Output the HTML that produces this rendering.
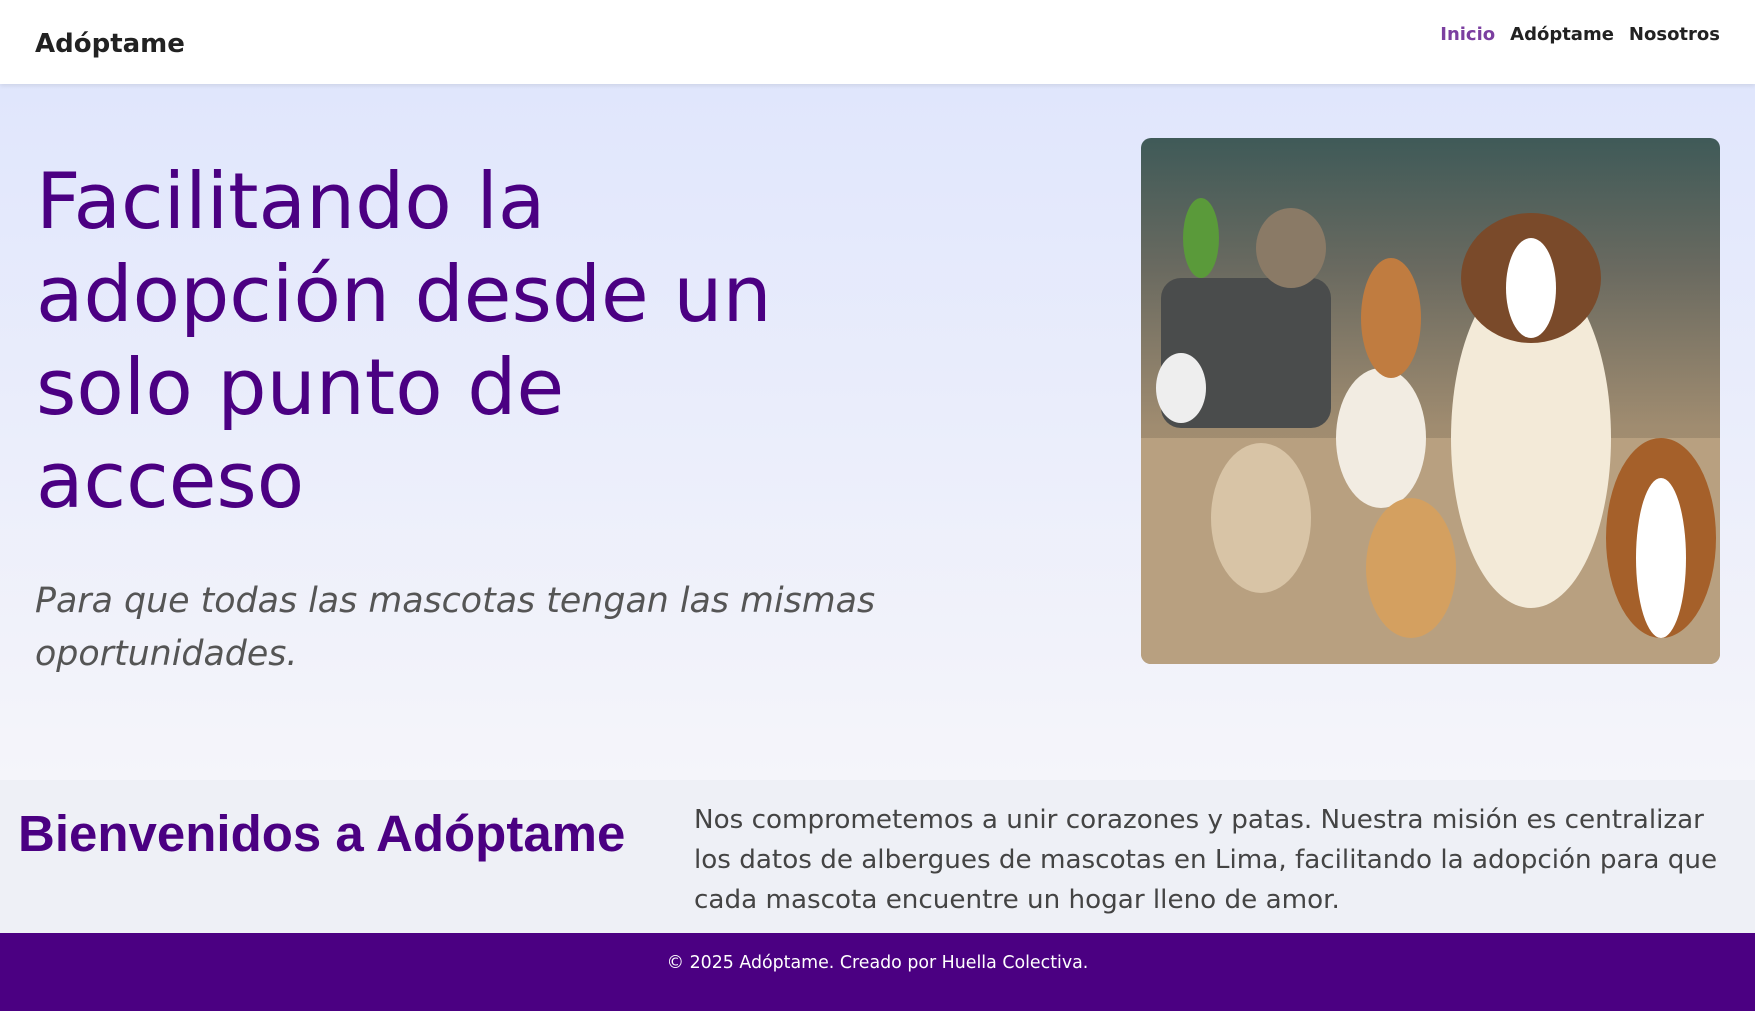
<!DOCTYPE html>
<html><head><meta charset="utf-8"><style>
*{margin:0;padding:0;box-sizing:border-box}
body{width:1755px;height:1011px;overflow:hidden;font-family:"DejaVu Sans","Liberation Sans",sans-serif;background:#fff}
header{height:84px;background:#fff;position:relative;box-shadow:0 2px 4px rgba(0,0,0,.08);z-index:2}
.logo{position:absolute;left:35px;top:29px;font-weight:bold;font-size:26px;color:#222}
nav{position:absolute;right:35px;top:24px;font-weight:bold;font-size:18px;color:#222}
nav span{margin-left:15px}
nav .on{color:#7b3fa0}
.hero{position:absolute;top:84px;left:0;width:1755px;height:696px;background:linear-gradient(#e0e6fc,#f5f5fa)}
h1{position:absolute;left:36px;top:72px;font-weight:normal;font-size:77.5px;line-height:93px;color:#4b0082;width:770px}
.sub{position:absolute;left:35px;top:491px;font-style:italic;font-size:34.8px;line-height:53px;color:#555;width:920px}
.img{position:absolute;left:1141px;top:54px;width:579px;height:526px;border-radius:10px;overflow:hidden;background:linear-gradient(#3f5a58 0%,#6a6a60 25%,#a08c70 55%,#b49c7e 100%)}
.sec{position:absolute;top:780px;left:0;width:1755px;height:153px;background:#eef0f6}
h2{position:absolute;left:18px;top:24px;font-family:"Liberation Sans",sans-serif;font-weight:bold;font-size:51px;color:#4b0082}
.sec p{position:absolute;left:694px;top:20px;width:1030px;font-size:26.2px;line-height:40px;color:#444}
footer{position:absolute;top:933px;left:0;width:1755px;height:78px;background:#4b0082;color:#fff;text-align:center;font-size:17.4px;padding-top:20px}
</style></head><body>
<header><div class="logo">Adóptame</div><nav><span class="on">Inicio</span><span>Adóptame</span><span>Nosotros</span></nav></header>
<div class="hero">
<h1>Facilitando la adopción desde un solo punto de acceso</h1>
<div class="sub">Para que todas las mascotas tengan las mismas oportunidades.</div>
<div class="img">
<svg width="579" height="526" viewBox="0 0 579 526">
<rect x="0" y="300" width="579" height="226" fill="#b8a080"/>
<ellipse cx="390" cy="300" rx="80" ry="170" fill="#f3ead8"/>
<ellipse cx="390" cy="140" rx="70" ry="65" fill="#7a4a2a"/>
<ellipse cx="390" cy="150" rx="25" ry="50" fill="#fff"/>
<rect x="20" y="140" width="170" height="150" rx="20" fill="#4a4c4c"/>
<ellipse cx="240" cy="300" rx="45" ry="70" fill="#f2ece2"/>
<ellipse cx="120" cy="380" rx="50" ry="75" fill="#d8c4a6"/>
<ellipse cx="270" cy="430" rx="45" ry="70" fill="#d4a060"/>
<ellipse cx="520" cy="400" rx="55" ry="100" fill="#a5602a"/>
<ellipse cx="520" cy="420" rx="25" ry="80" fill="#fff"/>
<ellipse cx="250" cy="180" rx="30" ry="60" fill="#c07c40"/>
<ellipse cx="150" cy="110" rx="35" ry="40" fill="#8a7a66"/>
<ellipse cx="60" cy="100" rx="18" ry="40" fill="#5a9a3a"/>
<ellipse cx="40" cy="250" rx="25" ry="35" fill="#eeeeee"/>
</svg></div>
</div>
<div class="sec"><h2>Bienvenidos a Adóptame</h2><p>Nos comprometemos a unir corazones y patas. Nuestra misión es centralizar los datos de albergues de mascotas en Lima, facilitando la adopción para que cada mascota encuentre un hogar lleno de amor.</p></div>
<footer>© 2025 Adóptame. Creado por Huella Colectiva.</footer>
</body></html>
